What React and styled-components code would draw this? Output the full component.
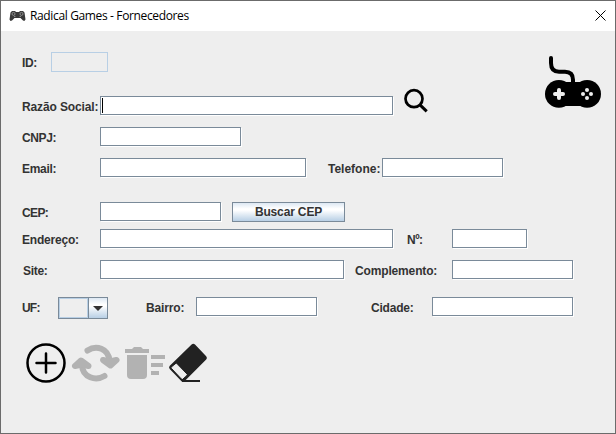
import React from 'react';
import styled, { createGlobalStyle } from 'styled-components';

const GlobalStyle = createGlobalStyle`
  * { box-sizing: border-box; }
  body { margin: 0; background: #6b6b6b; overflow: hidden; }
`;

const Dialog = styled.div`
  display: flex;
  flex-direction: column;
  width: 616px;
  height: 434px;
  border: 1px solid #6b6b6b;
  background: #eeeeee;
  color: #333333;
  font: bold 12px/16px 'Liberation Sans', Arial, sans-serif;
`;

const TitleBar = styled.header`
  display: flex;
  align-items: center;
  flex: none;
  height: 30px;
  padding: 0 9px 0 8px;
  background: #ffffff;
  color: #000000;
`;

const Title = styled.h1`
  margin: 0 auto 0 4px;
  font: 12px/16px 'Open Sans', 'Noto Sans', sans-serif;
  letter-spacing: -0.36px;
  white-space: nowrap;
`;

const CloseButton = styled.button`
  display: flex;
  margin-bottom: 1px;
  padding: 0;
  border: 0;
  background: none;
`;

const Form = styled.main`
  display: flex;
  flex-direction: column;
  padding: 21px 13px 0 21px;
`;

const TopSection = styled.section`
  display: flex;
  justify-content: space-between;
  height: 64px;
`;

const Row = styled.div`
  display: flex;
  height: 20px;
  margin-top: ${(p) => p.$gap || 0}px;
`;

const Label = styled.label`
  flex: none;
  width: ${(p) => p.$width}px;
  margin-left: ${(p) => p.$indent || 0}px;
  padding-top: 3px;
  letter-spacing: ${(p) => p.$spacing || 0}px;
  white-space: nowrap;
`;

const Field = styled.input`
  flex: none;
  width: ${(p) => p.$width}px;
  height: 19px;
  padding: 0 3px;
  border: 1px solid #7a8a99;
  border-radius: 0;
  outline: none;
  background: #ffffff;
  box-shadow: 1px 1px 0 #ffffff;
  font: 12px 'Liberation Sans', Arial, sans-serif;
`;

const DisabledField = styled(Field)`
  height: 20px;
  border-color: #b8cfe5;
  background: #eeeeee;
  box-shadow: none;
`;

const ActiveField = styled.div`
  flex: none;
  width: 293px;
  height: 19px;
  padding: 1px;
  border: 1px solid #7a8a99;
  background: #ffffff;
  box-shadow: 1px 1px 0 #ffffff;
`;

const Caret = styled.span`
  display: block;
  width: 1px;
  height: 15px;
  background: #000000;
`;

const IconButton = styled.button`
  display: flex;
  flex: none;
  height: max-content;
  margin: ${(p) => p.$margin || 0};
  padding: 0;
  border: 0;
  background: none;
`;

const Button = styled.button`
  flex: none;
  width: 113px;
  height: 20px;
  margin-left: 11px;
  padding: 0;
  border: 1px solid #7a8a99;
  background: linear-gradient(#dde8f3 0%, #ffffff 32%, #ffffff 40%, #b8cfe5 100%);
  color: #333333;
  font: inherit;
  letter-spacing: -0.15px;
`;

const Combo = styled.div`
  display: flex;
  flex: none;
  width: 50px;
  height: 22px;
  border: 1px solid #7a8a99;
`;

const ComboValue = styled.span`
  width: 29px;
  border: 1px solid #b8cfe5;
`;

const ComboArrow = styled.span`
  display: flex;
  align-items: center;
  justify-content: center;
  flex: 1;
  border-left: 1px solid #7a8a99;
  background: linear-gradient(#dde8f3 0%, #ffffff 32%, #ffffff 40%, #b8cfe5 100%);
`;

const Toolbar = styled.footer`
  display: flex;
  margin-top: 25px;
  margin-left: 3px;
`;

const PadIcon = () => (
  <svg width="17" height="12" viewBox="0 0 17 12">
    <path d="M3 1h3l1 1h3l1-1h3l1.500 1.500L16.500 9.500l-1.200 1.500-1.300-.5L11.500 8h-6L3 10.500l-1.500.5L.500 9.500 1.500 2.500z" fill="#383838" />
    <path d="M5.300 7l1-1M10.700 6l1 1" stroke="#a8a8a8" fill="none" />
    <g fill="none" stroke="#a0a0a0" strokeWidth=".8">
      <circle cx="4.500" cy="3.900" r="1.500" />
      <circle cx="12.500" cy="3.900" r="1.500" />
    </g>
  </svg>
);

const ControllerIcon = () => (
  <svg width="58" height="54" viewBox="0 0 58 54">
    <path d="M7 3v5q0 8.700 8 8.700h6q8 0 8 8v3" fill="none" stroke="#000" strokeWidth="4" strokeLinecap="round" />
    <g fill="#000"><circle cx="14.900" cy="38.900" r="13.900" /><circle cx="43.100" cy="38.900" r="13.900" /><path d="M16 27h26v24H16z" /></g>
    <path d="M15 35v8M11 39h8" stroke="#eee" strokeWidth="4" strokeLinecap="round" />
    <g fill="#eee"><circle cx="43" cy="35" r="2" /><circle cx="43" cy="43" r="2" /><circle cx="39" cy="39" r="2" /><circle cx="47" cy="39" r="2" /></g>
  </svg>
);

const SearchIcon = () => (
  <svg width="25" height="26" viewBox="0 0 25 26">
    <circle cx="10" cy="10.700" r="8.500" fill="none" stroke="#000" strokeWidth="2.700" />
    <path d="M16 16.800l6.700 6.500" stroke="#000" strokeWidth="3" />
  </svg>
);

const AddIcon = () => (
  <svg width="42" height="42" viewBox="0 0 42 42">
    <circle cx="21" cy="21" r="18.500" fill="none" stroke="#000" strokeWidth="2.500" />
    <path d="M21 11.500v19M11.500 21h19" stroke="#000" strokeWidth="2.500" strokeLinecap="round" />
  </svg>
);

const RefreshIcon = () => (
  <svg width="50" height="42" viewBox="0 0 50 42">
    <g fill="none" stroke="#b2b2b2" strokeWidth="6" strokeLinecap="round" strokeLinejoin="round">
      <path d="M16.500 8.500C25 3 37.500 6 38.500 19" />
      <path d="M32 18l7.500 5.500L45.500 18l-7 1.500z" fill="#b2b2b2" />
      <path d="M33.500 34C25 39 11.500 36 11 23" />
      <path d="M17.500 24l-7.500-5.500L4 24l7-1.500z" fill="#b2b2b2" />
    </g>
  </svg>
);

const TrashIcon = () => (
  <svg width="42" height="42" viewBox="0 0 42 42">
    <path d="M1 7h7l2-2h7l2 2h6v4H1zM3 13h20v20q0 4-4 4H7q-4 0-4-4zM27 13h14v4H27zM27 21h12v4H27zM27 29h8v4h-8z" fill="#b2b2b2" />
  </svg>
);

const EraserIcon = () => (
  <svg width="42" height="42" viewBox="0 0 42 42">
    <path d="M1.800 23.800L23.600 2.500q1.700-1.500 3.400 0l11.200 11.800q1.500 1.600 0 3.300L16.500 39.300q-1.500 1-3 0L1.700 27q-1.400-1.600.1-3.200z" fill="#222" />
    <path d="M8.300 22L3.800 25.700 14.200 36.700 18.600 32.700z" fill="#eee" stroke="#eee" strokeWidth="1" strokeLinejoin="round" />
    <path d="M14 39h18" stroke="#222" strokeWidth="2" />
  </svg>
);

export default function App() {
  return (
    <>
      <GlobalStyle />
      <Dialog>
        <TitleBar>
          <PadIcon />
          <Title>Radical Games - Fornecedores</Title>
          <CloseButton aria-label="Fechar">
            <svg width="11" height="11" viewBox="0 0 11 11"><path d="M.5.5l10 10M10.500.5l-10 10" stroke="#000" /></svg>
          </CloseButton>
        </TitleBar>
        <Form>
          <TopSection>
            <div>
              <Row>
                <Label $width={29} $spacing={-0.4}>ID:</Label>
                <DisabledField $width={57} disabled />
              </Row>
              <Row $gap={24}>
                <Label $width={78} $spacing={-0.12}>Razão Social:</Label>
                <ActiveField><Caret /></ActiveField>
                <IconButton $margin="-8px 0 0 11px" aria-label="Pesquisar"><SearchIcon /></IconButton>
              </Row>
            </div>
            <IconButton as="div" $margin="3px 0 0"><ControllerIcon /></IconButton>
          </TopSection>
          <Row $gap={11}>
            <Label $width={78} $spacing={-0.4}>CNPJ:</Label>
            <Field $width={141} />
          </Row>
          <Row $gap={11}>
            <Label $width={78} $spacing={-0.3}>Email:</Label>
            <Field $width={206} />
            <Label $width={54} $indent={22}>Telefone:</Label>
            <Field $width={121} />
          </Row>
          <Row $gap={24}>
            <Label $width={78} $spacing={-0.6}>CEP:</Label>
            <Field $width={121} />
            <Button>Buscar CEP</Button>
          </Row>
          <Row $gap={7}>
            <Label $width={78} $spacing={-0.2}>Endereço:</Label>
            <Field $width={293} />
            <Label $width={45} $indent={14} $spacing={-0.5}>Nº:</Label>
            <Field $width={75} />
          </Row>
          <Row $gap={11}>
            <Label $width={77} $indent={1} $spacing={-0.3}>Site:</Label>
            <Field $width={244} />
            <Label $width={97} $indent={11} $spacing={-0.15}>Complemento:</Label>
            <Field $width={121} />
          </Row>
          <Row $gap={17}>
            <Label $width={36} $spacing={-0.8}>UF:</Label>
            <Combo>
              <ComboValue />
              <ComboArrow>
                <svg width="10" height="5" viewBox="0 0 10 5"><path d="M0 0h10L5 5z" fill="#333" /></svg>
              </ComboArrow>
            </Combo>
            <Label $width={50} $indent={38} $spacing={-0.15}>Bairro:</Label>
            <Field $width={121} />
            <Label $width={61} $indent={54} $spacing={-0.2}>Cidade:</Label>
            <Field $width={141} />
          </Row>
          <Toolbar>
            <IconButton aria-label="Adicionar"><AddIcon /></IconButton>
            <IconButton $margin="0 0 0 4px" aria-label="Atualizar"><RefreshIcon /></IconButton>
            <IconButton $margin="0 0 0 3px" aria-label="Excluir"><TrashIcon /></IconButton>
            <IconButton $margin="0 0 0 2px" aria-label="Limpar"><EraserIcon /></IconButton>
          </Toolbar>
        </Form>
      </Dialog>
    </>
  );
}
